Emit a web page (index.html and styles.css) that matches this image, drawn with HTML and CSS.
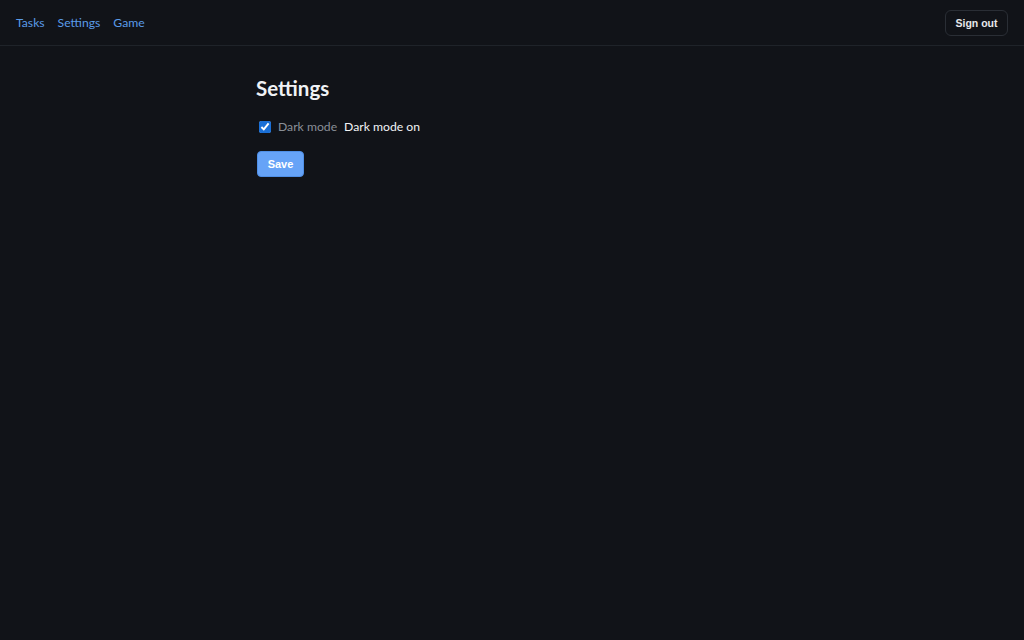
FILE: index.html
```html
<!DOCTYPE html>
<html lang="en">
<head>
<meta charset="utf-8">
<title>Settings</title>
<link rel="stylesheet" href="styles.css">
</head>
<body>
<header class="topbar">
  <nav class="nav">
    <a href="#" class="nav-link">Tasks</a>
    <a href="#" class="nav-link">Settings</a>
    <a href="#" class="nav-link">Game</a>
  </nav>
  <button class="signout">Sign out</button>
</header>
<main class="content">
  <h1 class="title">Settings</h1>
  <div class="row">
    <label class="toggle"><input type="checkbox" class="check" checked> Dark mode</label>
    <span class="state">Dark mode on</span>
  </div>
  <button class="save">Save</button>
</main>
</body>
</html>
```
FILE: styles.css
```css
html, body {
  margin: 0;
  padding: 0;
  background: #111318;
  color: #e6e8eb;
  font-family: "Lato", "Open Sans", sans-serif;
}
.topbar {
  height: 46px;
  box-sizing: border-box;
  display: flex;
  align-items: center;
  justify-content: space-between;
  padding: 0 16px;
  border-bottom: 1px solid #1f2329;
}
.nav {
  display: flex;
  gap: 13px;
}
.nav-link {
  color: #5a9be8;
  text-decoration: none;
  font-size: 12.2px;
}
.signout {
  font-family: "Liberation Sans", Arial, sans-serif;
  font-size: 10.5px;
  font-weight: 600;
  color: #e6e8eb;
  background: #111318;
  border: 1px solid #2a2e35;
  border-radius: 6px;
  height: 26px;
  width: 63px;
  padding: 0;
}
.content {
  width: 512px;
  margin: 0 auto;
  padding-top: 30px;
}
.title {
  font-size: 20.5px;
  font-weight: 700;
  margin: 0 0 19px;
  color: #f0f2f5;
}
.row {
  display: flex;
  align-items: center;
  gap: 7px;
  font-size: 12.2px;
}
.toggle {
  color: #8a8f97;
  display: flex;
  align-items: center;
}
.check {
  margin: 0 7px 0 3px;
  width: 12px;
  height: 12px;
  accent-color: #1a6fd6;
}
.state {
  color: #f3f4f6;
}
.save {
  margin-top: 17px;
  font-family: "Liberation Sans", Arial, sans-serif;
  font-size: 11px;
  font-weight: 600;
  color: #ffffff;
  background: #66a3f7;
  border: 1px solid #4f8fe6;
  border-radius: 4px;
  width: 47px;
  height: 26px;
  padding: 0;
  margin-left: 1px;
}
```
